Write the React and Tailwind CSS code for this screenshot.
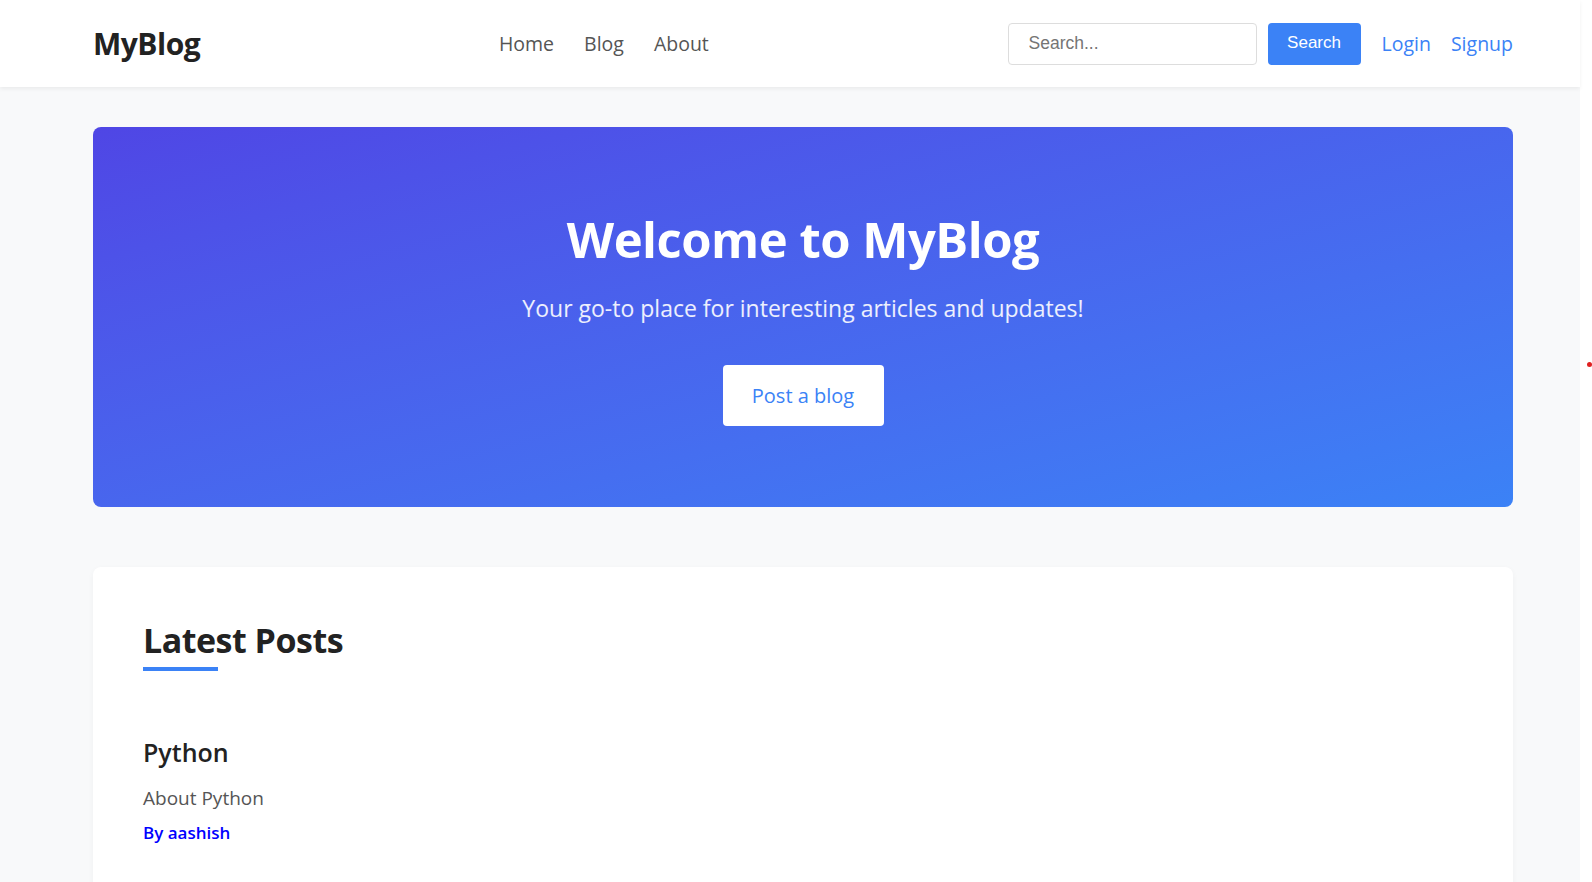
import React from 'react';

const font = { fontFamily: '"Open Sans", "Noto Sans", sans-serif' };
const arial = { fontFamily: '"Liberation Sans", Arial, sans-serif' };

const Header = () => (
  <header className="bg-white shadow-[0_2px_4px_rgba(0,0,0,0.06)] h-[87px] pl-[93px] pr-[67px] flex items-center justify-between relative z-10">
    <div className="text-[30px] font-bold text-[#222] tracking-[-0.5px]">MyBlog</div>
    <nav className="flex items-center gap-[30px] text-[19.5px] font-medium text-[#555]">
      <a href="#">Home</a>
      <a href="#">Blog</a>
      <a href="#">About</a>
    </nav>
    <div className="flex items-center">
      <input
        type="text"
        placeholder="Search..."
        className="w-[249px] h-[42px] border border-[#ddd] rounded-[4px] pl-[20px] text-[17.5px] placeholder-[#757575] outline-none"
        style={arial}
      />
      <button className="ml-[11px] w-[93px] h-[42px] bg-[#3b82f6] text-white rounded-[4px] text-[17px] pb-[2px]" style={arial}>
        Search
      </button>
      <a href="#" className="ml-[21px] text-[19.5px] text-[#3b82f6]">Login</a>
      <a href="#" className="ml-[20px] text-[19.5px] text-[#3b82f6]">Signup</a>
    </div>
  </header>
);

const Hero = () => (
  <section className="mt-[40px] h-[380px] rounded-[8px] bg-linear-to-br from-[#4f46e5] to-[#3b82f6] flex flex-col items-center pt-[83px] text-white">
    <h1 className="text-[49px] font-bold leading-[1.2] tracking-[-0.5px]">Welcome to MyBlog</h1>
    <p className="mt-[22px] text-[23px] text-white/90 leading-[1.5]">Your go-to place for interesting articles and updates!</p>
    <button className="mt-[40px] w-[161px] h-[61px] bg-white text-[#3b82f6] rounded-[4px] text-[20px] font-medium">
      Post a blog
    </button>
  </section>
);

const Posts = () => (
  <section className="mt-[60px] bg-white rounded-[8px] shadow-[0_2px_6px_rgba(0,0,0,0.04)] px-[50px] pt-[53px] pb-[60px]">
    <h2 className="text-[34px] font-bold text-[#222] leading-[1.2] tracking-[-0.5px]">Latest Posts</h2>
    <div className="mt-[6px] w-[75px] h-[4px] bg-[#3b82f6]"></div>
    <div className="mt-[65px]">
      <h3 className="text-[25px] font-semibold text-[#222] leading-[1.3]">Python</h3>
      <p className="mt-[16px] text-[19px] text-[#555]">About Python</p>
      <p className="mt-[7px] text-[17px] font-semibold text-[#0000ff]">By aashish</p>
    </div>
  </section>
);

export default function App() {
  return (
    <div className="flex min-h-[882px] w-full overflow-hidden" style={font}>
      <div className="w-[1580px] bg-[#f8f9fa] min-h-[882px]">
        <Header />
        <main className="pl-[93px] pr-[67px]">
          <Hero />
          <Posts />
        </main>
      </div>
      <aside className="w-[12px] bg-white relative">
        <span className="absolute left-[7px] top-[362px] w-[5px] h-[5px] rounded-full bg-[#e02020]"></span>
      </aside>
    </div>
  );
}
